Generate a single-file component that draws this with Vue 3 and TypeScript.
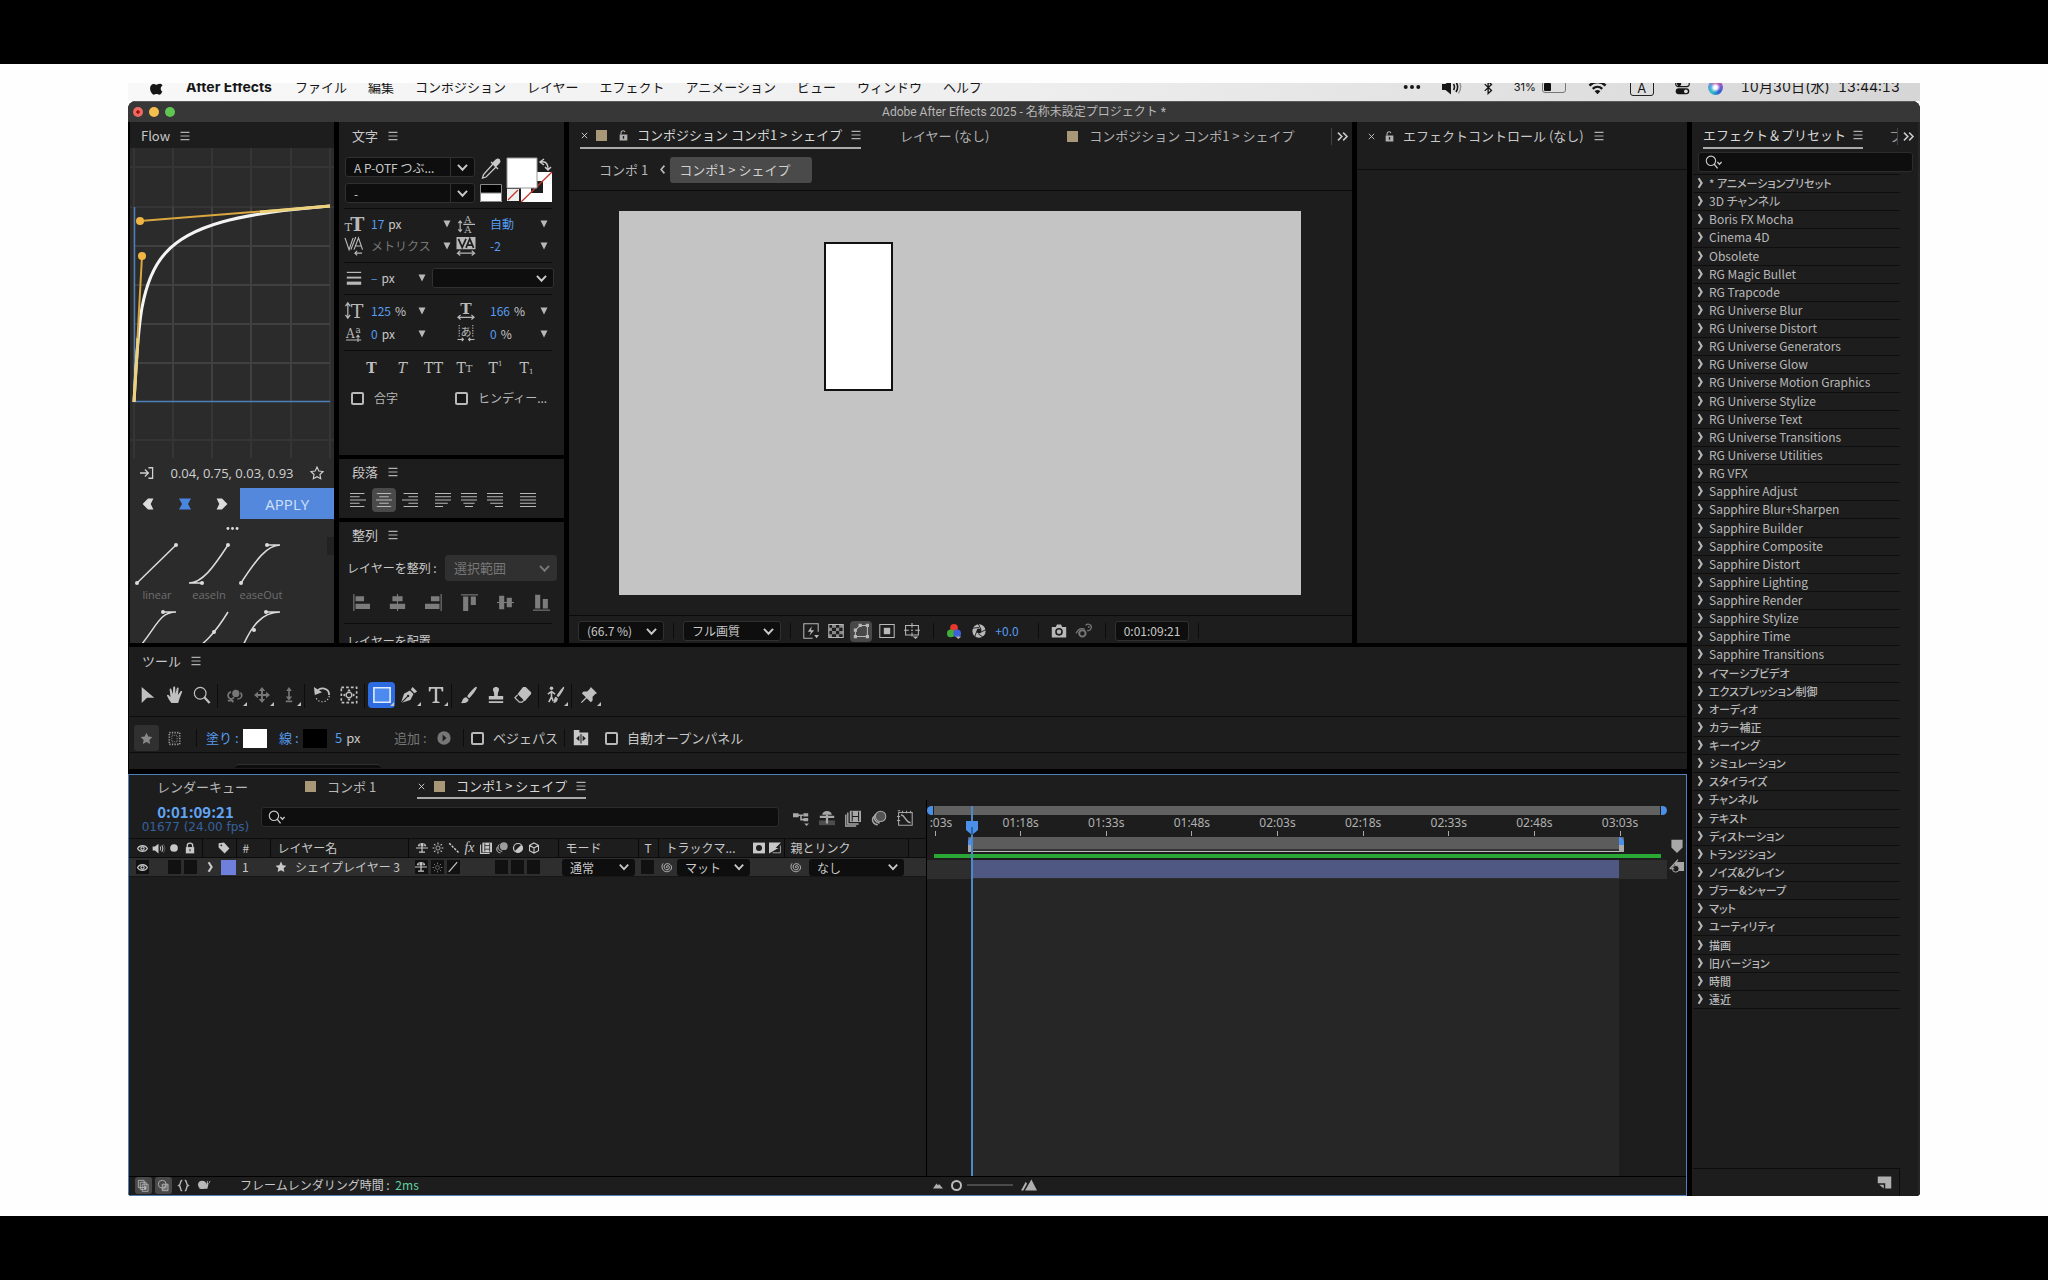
<script setup lang="ts">
import { h, ref } from 'vue'

const F = 'fill="currentColor" stroke="none"'
const SERIF = 'font-family="DejaVu Serif, serif" fill="currentColor" stroke="none"'

const ICONS: Record<string, string> = {
  apple: `<path ${F} d="M13.6 1c.1 1.400-1.300 3.400-3.200 3.400C10.200 2.800 11.800 1.200 13.600 1zM16.800 14.600c-.8 1.900-2 3.900-3.500 3.900-1.300 0-1.700-.8-3.200-.8s-2 .8-3.200.8C4.800 18.500 2.400 14.300 2.400 11c0-3.400 2.200-5.200 4.200-5.200 1.400 0 2.500.9 3.400.9.800 0 2.200-1 3.900-1 .7 0 2.200.2 3.200 1.800-3.100 1.900-2.500 5.800-.3 7.100z"/>`,
  dots3: `<g ${F}><circle cx="3" cy="10" r="2.200"/><circle cx="10" cy="10" r="2.200"/><circle cx="17" cy="10" r="2.200"/></g>`,
  speaker: `<path ${F} d="M1 7h3.500L10 2.500v15L4.500 13H1z"/><path stroke-width="1.600" d="M12.500 7c1.300 2 1.300 4 0 6M15 5c2.300 3.500 2.300 6.500 0 10"/><path opacity=".4" d="M17.500 3.500c3 4.500 3 8.500 0 13"/>`,
  bluetooth: `<path stroke-width="1.800" d="M5 5.500l9 8.500-4.500 4V2L14 6l-9 8.500"/>`,
  wifi: `<path stroke-width="2.400" d="M1.500 8c5-5 12-5 17 0M5 11.500c3-3 7-3 10 0"/><path ${F} d="M7 14c2-1.800 4-1.800 6 0l-3 3.200z"/>`,
  toggles: `<rect x="2" y="3" width="16" height="6" rx="3"/><circle ${F} cx="6" cy="6" r="2.500"/><rect ${F} x="2" y="11" width="16" height="7" rx="3.500"/><circle cx="14" cy="14.500" r="2.200" fill="#ddd" stroke="none"/>`,
  menu: `<path stroke-width="1.800" d="M2.500 4h15M2.500 10h15M2.500 16h15"/>`,
  close: `<path stroke-width="2" d="M4 4l12 12M16 4L4 16"/>`,
  lock: `<path ${F} d="M3 8h14v11H3z"/><path stroke-width="2" d="M5.500 8V5c0-4.500 6.500-4.500 7-1"/><path stroke="#1d1d1d" stroke-width="2.400" d="M10 11v5"/>`,
  locked: `<path ${F} d="M3 8.500h14V19H3z"/><path stroke-width="2.200" d="M5.500 9V6c0-5.500 9-5.500 9 0v3"/><path stroke="#1d1d1d" stroke-width="1.600" d="M10 11.500v4"/>`,
  more: `<path stroke-width="2.400" d="M3 4l6 6-6 6M11 4l6 6-6 6"/>`,
  chev: `<path stroke-width="3" d="M3 6l7 7.500L17 6"/>`,
  right: `<path stroke-width="3.600" d="M6 2l5 8-5 8"/>`,
  left: `<path stroke-width="3" d="M13.500 3L7.500 10l6 7"/>`,
  tri: `<path ${F} d="M3 3h14l-7 14z"/>`,
  search: `<circle cx="7" cy="8" r="5.500"/><path stroke-width="1.600" d="M10.800 12l4 5M14.500 9.500l2.500 2.500 2.500-2.500"/>`,
  dropper: `<path d="M11 6.500l3 3-8.500 8.500-3.500 1 .8-3.600z"/>`,
  size: `<text ${SERIF} x="0" y="17" font-size="12">T</text><text ${SERIF} x="6" y="17" font-size="20" font-weight="700">T</text>`,
  leading: `<text ${SERIF} x="8" y="9" font-size="11">A</text><path d="M7 10.500h13M3.500 7v11M1.500 9l2-2.500 2 2.500M1.500 16l2 2.500 2-2.500"/><text ${SERIF} x="8" y="20" font-size="11">A</text>`,
  kern: `<path d="M0 1l4.500 13L9 1M6.500 14L12 0M10 14l5-13 4.500 13M11.500 10h6M19 18h-8M13.500 15.500L11 18l2.500 2.500"/>`,
  track: `<path ${F} d="M0 0h20v13H0z"/><path stroke="#1d1d1d" stroke-width="1.800" d="M2 2l4 9 4-9M10 11.500L14 2l4 9.500M11.500 8.500h5"/><path d="M1 17h18M4 14.500L1 17l3 2.500M16 14.500l3 2.500-3 2.500"/>`,
  strokes: `<path stroke-width="1.500" d="M1 3h18"/><path stroke-width="2.400" d="M1 9.500h18"/><path stroke-width="4" d="M1 16.500h18"/>`,
  vscale: `<path d="M3.500 3v14M1 5.500L3.500 2 6 5.500M1 14.500L3.500 18 6 14.500"/><text ${SERIF} x="6.500" y="17.500" font-size="20">T</text>`,
  hscale: `<text ${SERIF} x="3.500" y="13" font-size="17" font-weight="700">T</text><path d="M1 17h18M4 14.500L1 17l3 2.500M16 14.500l3 2.500-3 2.500"/>`,
  baseline: `<text ${SERIF} x="0" y="15" font-size="15">A</text><path d="M0 17.500h19M15 12v8M13 14l2-2.500 2 2.500"/><text ${SERIF} x="12" y="9" font-size="11">a</text>`,
  tsume: `<text x="3.500" y="13" font-size="13" font-family="Noto Sans CJK JP, sans-serif" fill="currentColor" stroke="none">あ</text><path stroke-dasharray="1.500 1.500" d="M2 0v14M18 0v14"/><path d="M0 17h7M5 15l2 2-2 2M20 17h-7M15 15l-2 2 2 2"/>`,
  alL: `<path d="M0 2h18M0 6h12M0 10h20M0 14h12M0 18h18"/>`,
  alC: `<path d="M1 2h18M4 6h12M0 10h20M4 14h12M1 18h18"/>`,
  alR: `<path d="M2 2h18M8 6h12M0 10h20M8 14h12M2 18h18"/>`,
  juL: `<path d="M0 2h20M0 6h20M0 10h20M0 14h16M0 18h10"/>`,
  juC: `<path d="M0 2h20M0 6h20M0 10h20M3 14h14M5 18h10"/>`,
  juR: `<path d="M0 2h20M0 6h20M0 10h20M4 14h16M10 18h10"/>`,
  juF: `<path d="M0 2h20M0 6h20M0 10h20M0 14h20M0 18h20"/>`,
  lyL: `<path d="M1 0v20"/><path ${F} d="M3 2.500h10v6H3zM3 11.500h17v6H3z"/>`,
  lyC: `<path d="M10 0v20"/><path ${F} d="M4 2.500h12v6H4zM1 11.500h18v6H1z"/>`,
  lyR: `<path d="M19 0v20"/><path ${F} d="M7 2.500h10v6H7zM0 11.500h17v6H0z"/>`,
  lyT: `<path d="M0 1h20"/><path ${F} d="M2.500 3h6v17h-6zM11.500 3h6v10h-6z"/>`,
  lyM: `<path d="M0 10h20"/><path ${F} d="M2.500 2h6v16h-6zM11.500 4.500h6v11h-6z"/>`,
  lyB: `<path d="M0 19h20"/><path ${F} d="M2.500 1h6v16h-6zM11.500 6h6v11h-6z"/>`,
  enter: `<path stroke-width="1.800" d="M0 10h11M7 5l5 5-5 5M12 2.500h6v15h-6"/>`,
  star: `<path stroke-width="1.600" d="M10 1.500l2.600 5.600 6 .8-4.400 4.200 1.100 6L10 15.200l-5.300 2.900 1.100-6L1.400 7.900l6-.8z"/>`,
  starF: `<path ${F} d="M10 1l2.800 5.900 6.200.9-4.600 4.400 1.200 6.300L10 15.500l-5.600 3 1.200-6.300L1 7.800l6.200-.9z"/>`,
  inL: `<path ${F} d="M10 1h9l-4.500 9 4.500 9h-9l-9-9z"/>`,
  both: `<path ${F} d="M0 1h20l-5 9 5 9H0l5-9z"/>`,
  inR: `<path ${F} d="M10 1H1l4.500 9L1 19h9l9-9z"/>`,
  pvFast: `<path d="M19 11V1H1v18h11"/><path ${F} d="M11 4l-5 7h4l-2 5 6-7h-4zM14 15h6l-3 4z"/>`,
  checker: `<path d="M1 2h18v16H1z"/><path ${F} d="M5 2h5v4H5zM14 2h5v4h-5zM1 6h4v4H1zM10 6h4v4h-4zM5 10h5v4H5zM14 10h5v4h-5zM1 14h4v4H1zM10 14h4v4h-4z" opacity=".7"/>`,
  maskp: `<path d="M3 17V9l6-6h9v14z"/><path ${F} d="M1 15h4v4H1zM16 15h4v4h-4zM16 1h4v4h-4zM7 1h4v4H7zM1 7h4v4H1z"/>`,
  roi: `<path d="M1 2h18v16H1z"/><path ${F} d="M6 6h8v8H6z"/>`,
  guides: `<path d="M2 3h16v12H2zM10 0v6M10 12v5M0 9h6M14 9h6"/><path ${F} d="M9 8h2v2H9zM11 17h7l-3.500 3z"/>`,
  rgb: `<circle cx="10" cy="6" r="4.800" fill="#e8382e" stroke="none"/><circle cx="6" cy="13" r="4.800" fill="#3fae3a" stroke="none"/><circle cx="14" cy="13" r="4.800" fill="#3b62d8" stroke="none"/><path ${F} d="M12 17h7l-3.500 3z"/>`,
  aperture: `<circle cx="10" cy="10" r="6.500" stroke-width="6"/><path stroke="#1d1d1d" d="M9 0l4 8M20 8l-8 4M16 19l-7-5M4 18l3-8M0 6l10-1"/>`,
  camera: `<path ${F} d="M1 5h5l1.500-3h5L14 5h5v13H1z"/><circle cx="10" cy="11" r="3.800" stroke="#1d1d1d" stroke-width="2"/>`,
  snap: `<circle cx="8" cy="13" r="4" stroke-width="2.500"/><path stroke-width="1.600" d="M0 13c3-6 7-7 11-5M12 3c3-3 8-1 7 3s-4 4-5 3M15 5h2"/>`,
  arrow: `<path ${F} d="M3 1l14 12H9l-6 6z"/>`,
  hand: `<path ${F} d="M6 19C4 16 2 13 1 10.500c.5-1.500 2-1 3 .8l1 1L4 4c0-1.500 1.800-1.500 2.100 0L7.500 9 8 1.800c.1-1.500 2.200-1.500 2.200 0L10.500 9l1.500-6.500c.4-1.500 2.200-1 2 .5L13.200 10 16 6c1-1 2.400-.3 1.800 1L15 14c-.5 2-1 3.500-1.500 5z"/>`,
  zoom: `<circle cx="8" cy="8" r="6.500"/><path stroke-width="2.500" d="M12.500 12.500L18.500 19"/>`,
  orbit: `<circle ${F} cx="11" cy="8" r="4.500"/><path stroke-width="2" d="M5 6C0 8 0 13 5 15M13 15c5 0 7-4 4-8M9 13l-4 2.500L8 19M1 17h7"/>`,
  pan: `<path stroke-width="2.400" d="M10 3v14M3 10h14"/><path ${F} d="M6 5l4-5 4 5zM6 15l4 5 4-5zM5 6l-5 4 5 4zM15 6l5 4-5 4z"/>`,
  dolly: `<path stroke-width="2" d="M10 3v12M6 18h8"/><path ${F} d="M6.500 5L10 0l3.500 5zM6 12h8l-4 5z"/>`,
  rotate: `<path stroke-width="2" d="M4 7c4-7 14-5 14 3"/><path stroke-dasharray="1.500 2" d="M18 11c-1 8-13 9-15 1"/><path ${F} d="M1 1l1 9 8-3z"/>`,
  anchor: `<path stroke-dasharray="3 2.300" stroke-width="1.800" d="M1.500 1.500h17v17h-17z"/><circle cx="10" cy="10" r="3"/><path ${F} d="M10 3l2 3H8zM10 17l2-3H8zM3 10l3-2v4zM17 10l-3-2v4z"/>`,
  rect: `<path stroke="#dfeaff" fill="#4c8af0" stroke-width="1.800" d="M1 2h18v16H1z"/>`,
  pen: `<path ${F} d="M1 19L4.500 8.500 11 5l4 4-3.500 6.500zM12 4l2-3 5 5-3 2z"/><path stroke="#1d1d1d" d="M1 19l7.500-7.500"/><circle cx="9" cy="11" r="1.300" fill="#1d1d1d" stroke="none"/>`,
  type: `<path ${F} d="M2 1h16v5h-1.500L15.500 3H11.300v14l2.700.8V19H6v-1.200l2.700-.8V3H4.500L3.500 6H2z"/>`,
  brush: `<path ${F} d="M18.500 1c1.500 1-6 11-8.500 12.500L8 11.500C10 8 17 0 18.500 1zM7 12.500l2.500 2.500c0 3-4 4.500-8.500 4 2-1 1-6 6-6.500z"/>`,
  stamp: `<path ${F} d="M10 1c3 0 4 2.500 3 4.500-1 2-1 3.500-1 5.500h6v4H2v-4h6c0-2 0-3.500-1-5.500S7 1 10 1zM2 17h16v2H2z"/>`,
  eraser: `<path ${F} d="M10 1h3l6 6v2l-7 8-8-8z"/><path d="M4 10l-3 3 5 5h3l2.500-2.500"/>`,
  roto: `<circle ${F} cx="5" cy="2.500" r="2"/><path stroke-width="1.800" d="M1 9l4-3 4 3M5 6v6l-3 6M5 12l2 5"/><path ${F} d="M19 1c1 1-4 9-6.500 11.500l-1.800-1.700C12.500 8 18 0 19 1zM10 12l2 2c0 3-2 5-5 5 1.500-2 0-6 3-7z"/>`,
  pin: `<path ${F} d="M12 1l7 7-2 .8-3 3.200v4L12 18l-4.500-4.500L2 19l-1-1 5.500-5.500L2 8l2-2h4l3-3z"/>`,
  maskbox: `<path stroke-dasharray="2 2" stroke-width="2.500" d="M2 1h16v18H2z"/><path stroke-dasharray="1.500 1.500" d="M6 5h8v10H6z"/>`,
  play: `<circle ${F} cx="10" cy="10" r="9.500"/><path fill="#1d1d1d" stroke="none" d="M8 5l5.500 5L8 15z"/>`,
  panelIc: `<path ${F} d="M1 0h7v3h11v16H1z"/><path stroke="#1d1d1d" d="M8.500 2h11M10 5v12"/><path fill="#1d1d1d" stroke="none" d="M8 7v7l-4-3.500zM12 7v7l4-3.500z"/>`,
  eye: `<path stroke-width="2" d="M1 10c4-7 14-7 18 0-4 7-14 7-18 0z"/><circle cx="10" cy="10" r="3" stroke-width="2"/>`,
  dot: `<circle ${F} cx="10" cy="10" r="5.500"/>`,
  tag: `<path ${F} d="M1 2l9-1 9 10-8 8L1 9z"/><circle cx="5.500" cy="5.500" r="1.500" fill="#1d1d1d" stroke="none"/>`,
  shy: `<path ${F} d="M3 7c0-7 14-7 14 0z"/><path stroke="#1d1d1d" d="M7 2.500V7M13 2.500V7"/><path stroke-width="2" d="M0 10h20M10 6v11M5 17h10"/>`,
  sun: `<circle cx="10" cy="10" r="3.500"/><path stroke-width="1.800" d="M10 1v3M10 16v3M1 10h3M16 10h3M3.500 3.500l2.200 2.200M14.300 14.300l2.200 2.200M16.500 3.500l-2.200 2.200M5.700 14.300l-2.200 2.200"/>`,
  qual: `<path stroke-width="2.500" stroke-dasharray="4 2" d="M2 2l16 16"/>`,
  slash: `<path stroke-width="2" d="M3 18L17 2"/>`,
  film: `<path ${F} d="M4 1h16v16H4z"/><path stroke="#1d1d1d" d="M8 2v14M16 2v14M8 6h8M8 12h8"/><path stroke-width="1.800" d="M1 4v15h15"/>`,
  blur: `<circle ${F} cx="13" cy="7" r="6.500" opacity=".75"/><path stroke-width="1.600" d="M5.500 4c-4 4-2 11 5 11.500M2.500 8c-3 5 0 10 5 10"/>`,
  blend: `<circle cx="10" cy="10" r="7.500" stroke-width="2"/><path ${F} d="M15.500 4.500a7.500 7.500 0 0 1-11 11z"/>`,
  cube: `<path stroke-width="1.800" d="M10 1.500l7.500 4v9L10 18.500l-7.500-4v-9zM2.500 5.500L10 10l7.500-4.500M10 10v8.500"/>`,
  spiral: `<path stroke-width="1.500" d="M11 11c-1.500.8-2.500-.5-2-2 1-2 5-1.500 5 1.500 0 4-4 5-6.500 3.500C3.500 11 5 4.500 10.500 4.500c5 0 8.500 4.500 6.500 9C14.500 18.500 8 19 4.500 16 1.500 13.500.5 8 3.500 4"/>`,
  matteA: `<path ${F} d="M0 1h20v18H0z"/><circle cx="10" cy="10" r="5" fill="#1d1d1d" stroke="none"/>`,
  matteB: `<path ${F} d="M0 1h20l-9 9 5 0-16 9z"/><path d="M19 6v12H6"/>`,
  flow: `<path ${F} d="M0 4h7v5H0zM13 4h6v4h-6zM13 10h6v4h-6zM14 17h6l-3 3z"/><path stroke-width="2" d="M5 6.500h8M10 6v6h4"/>`,
  shyBig: `<path ${F} d="M0 13h20v6H0z" opacity=".35"/><path ${F} d="M4 6c0-6.500 12-6.500 12 0z"/><path stroke-width="2.800" d="M1 8.500h18M10 6v11"/>`,
  frames: `<path ${F} d="M6 1h14v14H6z"/><path stroke="#1d1d1d" d="M9 2v12M17 2v12M9 8h8"/><path stroke-width="1.700" d="M3.500 3v14.500H17M1 5.500V20h13"/>`,
  blurBig: `<circle cx="12" cy="8" r="6.500" fill="currentColor" fill-opacity=".4"/><path stroke-width="1.700" d="M6 5c-4 4-2 10 5 11.500M3.500 8c-3.500 4-1 10 5 10.500"/>`,
  graph: `<path d="M2 3h17v16H2zM1 1h3M7 1v3M12 1v3M17 1v3M0 8h4M0 13h4"/><path stroke-width="1.800" d="M5 6c6 1 5 9 12 10"/>`,
  marker: `<path ${F} d="M2 1h16v11l-8 8-8-8z"/>`,
  compBtn: `<path ${F} d="M8 4h12v12H8z"/><circle cx="9" cy="13" r="4.500" fill="#1d1d1d"/><path stroke-width="1.600" d="M1 13L12 1M1 13h6"/>`,
  pages: `<path d="M2 2h9v11H2zM5 5h9v11H5zM8 8h9v11H8z"/><path ${F} d="M11 11h3v5h-3z"/>`,
  pages2: `<circle cx="8" cy="8" r="6"/><path d="M8 8h9v10H8z" fill="currentColor" fill-opacity=".35"/><path d="M10 16l5-6"/>`,
  braces: `<path stroke-width="2.200" d="M8 2C4 2 7 8 3 10c4 2 1 8 5 8M12 2c4 0 1 6 5 8-4 2-1 8-5 8"/>`,
  snail: `<circle ${F} cx="8" cy="9" r="6.500"/><path ${F} d="M2 15h14l2-9h-3l-2 6z"/><path d="M16 7V3M19 6l1-3"/>`,
  mount: `<path ${F} d="M0 17l7-10 3 4 2-3 8 9z"/>`,
  mounts: `<path ${F} d="M0 17l6-11 1.500 2.500L3 17zM5 17L13 3l7 14z"/>`,
  note: `<path ${F} d="M1 2h18v16h-8v-7H1z"/><path ${F} d="M3 13h6v5z"/>`
}

interface IconProps { n: string; s?: number }
const Icon = (p: IconProps) =>
  h('svg', {
    viewBox: '0 0 20 20', width: p.s ?? 16, height: p.s ?? 16, fill: 'none', stroke: 'currentColor',
    'stroke-width': 1.3, 'aria-hidden': 'true', overflow: 'visible', innerHTML: ICONS[p.n]
  })
Icon.props = ['n', 's']

const menus = ['ファイル', '編集', 'コンポジション', 'レイヤー', 'エフェクト', 'アニメーション', 'ビュー', 'ウィンドウ', 'ヘルプ']

const effects = [
  '* アニメーションプリセット', '3D チャンネル', 'Boris FX Mocha', 'Cinema 4D', 'Obsolete', 'RG Magic Bullet', 'RG Trapcode',
  'RG Universe Blur', 'RG Universe Distort', 'RG Universe Generators', 'RG Universe Glow', 'RG Universe Motion Graphics',
  'RG Universe Stylize', 'RG Universe Text', 'RG Universe Transitions', 'RG Universe Utilities', 'RG VFX', 'Sapphire Adjust',
  'Sapphire Blur+Sharpen', 'Sapphire Builder', 'Sapphire Composite', 'Sapphire Distort', 'Sapphire Lighting', 'Sapphire Render',
  'Sapphire Stylize', 'Sapphire Time', 'Sapphire Transitions', 'イマーシブビデオ', 'エクスプレッション制御', 'オーディオ', 'カラー補正',
  'キーイング', 'シミュレーション', 'スタイライズ', 'チャンネル', 'テキスト', 'ディストーション', 'トランジション', 'ノイズ&グレイン',
  'ブラー&シャープ', 'マット', 'ユーティリティ', '描画', '旧バージョン', '時間', '遠近'
]
const isJapanese = (s: string) => !/^[A-Z0-9]/.test(s)

const tools: string[][] = [
  ['arrow', 'hand', 'zoom'], ['orbit*', 'pan*', 'dolly*'], ['rotate', 'anchor'], ['rect*', 'pen*', 'type*'],
  ['brush', 'stamp', 'eraser'], ['roto*'], ['pin*']
]
const active = ref('rect*')
const dimmed = ['orbit*', 'pan*', 'dolly*']

const presets = [
  { name: 'linear', d: 'M4 42L43 4', dots: [[4, 42], [43, 4]] },
  { name: 'easeIn', d: 'M4 42H17M4 42C17 42 28 27 43 4', dots: [[17, 42], [43, 4]] },
  { name: 'easeOut', d: 'M4 42C19 19 30 4 43 4M43 4H30', dots: [[4, 42], [30, 4]] },
  { name: '', d: 'M4 42C24 19 26 4 43 4M43 4H30', dots: [[30, 4]] },
  { name: '', d: 'M4 42C16 42 32 22 43 4', dots: [[29, 24]] },
  { name: '', d: 'M4 42C14 19 24 4 43 4M43 4H29', dots: [[17, 22], [29, 4]] }
]

const gridX = [4, 43, 82, 121, 161, 200]
const gridY = [98, 137, 176, 215]
const faintY = [19, 59, 292]

const ticks = [':03s', '01:18s', '01:33s', '01:48s', '02:03s', '02:18s', '02:33s', '02:48s', '03:03s']
const tickLeft = (i: number) => `${(i / (ticks.length - 1)) * 100}%`
const search = ref('')
const layerSearch = ref('')
</script>

<template>
  <div class="page">
    <div class="paper">
      <nav class="menubar">
        <Icon n="apple" :s="17" class="apple" />
        <a href="#" class="appname">After Effects</a>
        <a v-for="m in menus" :key="m" href="#">{{ m }}</a>
        <div class="status">
          <Icon n="dots3" :s="18" />
          <Icon n="speaker" :s="20" class="s1" />
          <Icon n="bluetooth" :s="15" class="s2" />
          <span class="pct">31%</span>
          <span class="battery"><i></i></span>
          <Icon n="wifi" :s="19" class="s3" />
          <span class="ime">A</span>
          <Icon n="toggles" :s="17" class="s4" />
          <span class="siri"></span>
          <span class="date">10月30日(水)</span>
          <span class="clock">13:44:13</span>
        </div>
      </nav>

      <div class="window">
        <header class="titlebar">
          <div class="lights"><i class="r"></i><i class="y"></i><i class="g"></i></div>
          <h1>Adobe After Effects 2025 - 名称未設定プロジェクト *</h1>
        </header>

        <div class="work">
          <div class="main">
            <div class="upper">
              <section class="panel flowp">
                <div class="tabs"><span class="title">Flow</span><Icon n="menu" :s="12" class="mn" /></div>
                <div class="flowbody">
                  <svg class="curve" viewBox="0 0 204 310" width="204" height="310">
                    <g stroke="#353535" stroke-width="2">
                      <path v-for="x in gridX" :key="'x' + x" :d="`M${x} 0V310`" />
                      <path v-for="y in faintY" :key="'f' + y" :d="`M0 ${y}H204`" />
                    </g>
                    <g stroke="#404040" stroke-width="2">
                      <path v-for="x in gridX.slice(1, 5)" :key="'v' + x" :d="`M${x} 59V254`" />
                      <path v-for="y in gridY" :key="'y' + y" :d="`M4 ${y}H200`" />
                    </g>
                    <path d="M4.500 59V253.500H200" fill="none" stroke="#4d7fb8" stroke-width="1.500" />
                    <path d="M4 254C12 108 10 73 200 58" fill="none" stroke="#f4f4f4" stroke-width="3" />
                    <path d="M4 254L12 108M10 73L200 58" stroke="#d9a63f" stroke-width="2" />
                    <path d="M4 254L8 190M130 64L200 58" stroke="#ecd07c" stroke-width="3" />
                    <circle cx="12" cy="108" r="4" fill="#f0b543" /><circle cx="10" cy="73" r="4" fill="#f0b543" />
                  </svg>
                  <div class="vals"><Icon n="enter" :s="14" /><span>0.04, 0.75, 0.03, 0.93</span><Icon n="star" :s="14" /></div>
                  <div class="apply">
                    <button aria-label="in"><Icon n="inL" :s="12" /></button>
                    <button aria-label="both" class="on"><Icon n="both" :s="12" /></button>
                    <button aria-label="out"><Icon n="inR" :s="12" /></button>
                    <button class="go">APPLY</button>
                  </div>
                  <div class="grip"><Icon n="dots3" :s="13" /></div>
                  <div class="presets">
                    <figure v-for="(p, i) in presets" :key="i">
                      <svg viewBox="0 0 48 46" width="48" height="46">
                        <path :d="p.d" fill="none" stroke="#dcdcdc" stroke-width="1.500" />
                        <circle v-for="(c, j) in p.dots" :key="j" :cx="c[0]" :cy="c[1]" r="2" fill="#dcdcdc" />
                      </svg>
                      <figcaption>{{ p.name }}</figcaption>
                    </figure>
                    <i class="scroll"></i>
                  </div>
                </div>
              </section>

              <div class="charcol">
                <section class="panel charp">
                  <div class="tabs"><span class="title">文字</span><Icon n="menu" :s="12" class="mn" /></div>
                  <div class="fontrow">
                    <div class="fonts">
                      <label class="sel split"><select aria-label="font"><option>A P-OTF つぶ...</option></select><Icon n="chev" :s="13" /></label>
                      <label class="sel split"><select aria-label="style"><option>-</option></select><Icon n="chev" :s="13" /></label>
                    </div>
                    <svg class="swatches" viewBox="0 0 74 46" width="74" height="46">
                      <g fill="none" stroke="#c8c8c8" stroke-width="1.300">
                        <path d="M13 7l3 3-10 10-3.500 1 1-3.500zM11 5l7 7" /><path d="M13 6l3-3c3-2 5 1 3 3l-3 3z" fill="#c8c8c8" />
                        <path d="M61 5c6-1 7 3 7 8M64 2l-4 3 4 3M65 10l3 3 3-3" stroke-width="1.500" />
                      </g>
                      <path d="M41 15h31v30H41z" fill="#fff" /><path d="M51 24h12v12H51z" fill="#1d1d1d" /><path d="M41 45L72 15" stroke="#c0392b" stroke-width="1.300" />
                      <path d="M27 1h30v30H27z" fill="#fff" stroke="#999" />
                      <path d="M0 27h22v9H0z" fill="#000" /><path d="M0 36h22v9H0z" fill="#fff" /><path d="M.5 27.500h21v17H.5zM0 36h22" fill="none" stroke="#8a8a8a" />
                      <path d="M27 32h12v12H27z" fill="#eee" /><path d="M28 43L38 33" stroke="#c0392b" stroke-width="1.300" />
                    </svg>
                  </div>
                  <hr>
                  <div class="crow">
                    <Icon n="size" :s="19" /><button class="v w">17 <em>px</em></button><Icon n="tri" :s="10" />
                    <div class="half"><Icon n="leading" :s="18" /><button class="v">自動</button><Icon n="tri" :s="10" /></div>
                  </div>
                  <div class="crow">
                    <Icon n="kern" :s="18" /><button class="v w dim">メトリクス</button><Icon n="tri" :s="10" />
                    <div class="half"><Icon n="track" :s="19" /><button class="v">-2</button><Icon n="tri" :s="10" /></div>
                  </div>
                  <hr>
                  <div class="crow stroke">
                    <Icon n="strokes" :s="16" /><button class="v">– <em>px</em></button><Icon n="tri" :s="10" />
                    <label class="sel"><select aria-label="stroke order"><option></option></select><Icon n="chev" :s="13" /></label>
                  </div>
                  <hr>
                  <div class="crow low">
                    <Icon n="vscale" :s="19" /><button class="v">125 <em>%</em></button><Icon n="tri" :s="10" />
                    <div class="half"><Icon n="hscale" :s="18" /><button class="v">166 <em>%</em></button><Icon n="tri" :s="10" /></div>
                  </div>
                  <div class="crow low">
                    <Icon n="baseline" :s="16" /><button class="v">0 <em>px</em></button><Icon n="tri" :s="10" />
                    <div class="half"><Icon n="tsume" :s="17" /><button class="v">0 <em>%</em></button><Icon n="tri" :s="10" /></div>
                  </div>
                  <hr>
                  <div class="styles">
                    <button><b>T</b></button><button><i>T</i></button><button>TT</button><button>T<small>T</small></button><button>T<sup>1</sup></button><button>T<sub>1</sub></button>
                  </div>
                  <div class="checks">
                    <label><input type="checkbox"><span>合字</span></label>
                    <label><input type="checkbox"><span>ヒンディー...</span></label>
                  </div>
                </section>

                <section class="panel parap">
                  <div class="tabs"><span class="title">段落</span><Icon n="menu" :s="12" class="mn" /></div>
                  <div class="aligns">
                    <button aria-label="left"><Icon n="alL" /></button><button aria-label="center" class="on"><Icon n="alC" /></button><button aria-label="right"><Icon n="alR" /></button>
                    <button aria-label="justify left" class="gap"><Icon n="juL" /></button><button aria-label="justify center"><Icon n="juC" /></button><button aria-label="justify right"><Icon n="juR" /></button>
                    <button aria-label="justify all" class="gap"><Icon n="juF" /></button>
                  </div>
                </section>

                <section class="panel alignp">
                  <div class="tabs"><span class="title">整列</span><Icon n="menu" :s="12" class="mn" /></div>
                  <div class="alrow">
                    <label for="alignto">レイヤーを整列 :</label>
                    <span class="sel"><select id="alignto" disabled><option>選択範囲</option></select><Icon n="chev" :s="13" /></span>
                  </div>
                  <div class="lyrow">
                    <button v-for="n in ['lyL', 'lyC', 'lyR', 'lyT', 'lyM', 'lyB']" :key="n" :aria-label="n"><Icon :n="n" :s="17" /></button>
                  </div>
                  <hr>
                  <p>レイヤーを配置</p>
                </section>
              </div>

              <section class="panel comp">
                <div class="tabs">
                  <div class="tab cur">
                    <Icon n="close" :s="9" /><i class="sq"></i><Icon n="lock" :s="11" class="lk" />
                    <span>コンポジション コンポ1 &gt; シェイプ</span><Icon n="menu" :s="12" class="mn" />
                  </div>
                  <div class="tab t2">レイヤー (なし)</div>
                  <div class="tab t3"><i class="sq"></i>コンポジション コンポ1 &gt; シェイプ</div>
                  <button class="morebtn" aria-label="more"><Icon n="more" :s="13" /></button>
                </div>
                <div class="crumbs">
                  <a href="#">コンポ 1</a><Icon n="left" :s="11" /><button>コンポ1 &gt; シェイプ</button>
                </div>
                <div class="viewer"><div class="canvas"><div class="shape"></div></div></div>
                <div class="vbar">
                  <label class="sel z"><select aria-label="zoom"><option>(66.7 %)</option></select><Icon n="chev" :s="13" /></label><i class="dv"></i>
                  <label class="sel q"><select aria-label="quality"><option>フル画質</option></select><Icon n="chev" :s="13" /></label><i class="dv"></i>
                  <div class="vic">
                    <button aria-label="fast preview"><Icon n="pvFast" /></button><button aria-label="transparency grid"><Icon n="checker" /></button>
                    <button aria-label="mask visibility" class="on"><Icon n="maskp" /></button><button aria-label="region"><Icon n="roi" /></button><button aria-label="guides"><Icon n="guides" /></button>
                  </div>
                  <i class="dv"></i>
                  <div class="vic"><button aria-label="channel"><Icon n="rgb" /></button><button aria-label="exposure reset"><Icon n="aperture" :s="14" /></button></div>
                  <button class="expo">+0.0</button><i class="dv"></i>
                  <div class="vic"><button aria-label="snapshot"><Icon n="camera" /></button><button aria-label="show snapshot" class="dim"><Icon n="snap" /></button></div>
                  <i class="dv"></i><button class="time">0:01:09:21</button><i class="dv"></i>
                </div>
              </section>

              <section class="panel ectl">
                <div class="tabs">
                  <div class="tab"><Icon n="close" :s="9" /><Icon n="lock" :s="11" class="lk" /><span>エフェクトコントロール (なし)</span><Icon n="menu" :s="12" class="mn" /></div>
                </div>
              </section>
            </div>

            <section class="panel toolsp">
              <div class="tabs"><span class="title">ツール</span><Icon n="menu" :s="12" class="mn" /></div>
              <div class="toolrow">
                <div v-for="(g, gi) in tools" :key="gi" class="group">
                  <button v-for="t in g" :key="t" :aria-label="t.replace('*', '')" :class="{ on: active === t, dim: dimmed.includes(t), sub: t.endsWith('*') }" @click="active = t">
                    <Icon :n="t.replace('*', '')" :s="dimmed.includes(t) ? 16 : 18" />
                  </button>
                </div>
              </div>
              <div class="optrow">
                <button class="st" aria-label="shape"><Icon n="starF" :s="13" /></button>
                <button class="mk" aria-label="mask"><Icon n="maskbox" :s="13" /></button>
                <span class="blue fill">塗り :</span><button class="sw white" aria-label="fill colour"></button>
                <span class="blue line">線 :</span><button class="sw" aria-label="stroke colour"></button>
                <button class="v px">5 <em>px</em></button>
                <span class="add">追加 : <Icon n="play" :s="14" /></span>
                <label class="bez"><input type="checkbox"><span>ベジェパス</span></label>
                <Icon n="panelIc" />
                <label class="auto"><input type="checkbox"><span>自動オープンパネル</span></label>
              </div>
              <div class="stub"></div>
            </section>

            <section class="panel timeline">
              <div class="tltabs">
                <div class="tab q">レンダーキュー</div>
                <div class="tab c"><i class="sq"></i>コンポ 1</div>
                <div class="tab cur"><Icon n="close" :s="9" /><i class="sq"></i><span>コンポ1 &gt; シェイプ</span><Icon n="menu" :s="12" class="mn" /></div>
              </div>
              <div class="tlbody">
                <div class="layers">
                  <div class="tlhead">
                    <div class="tc"><strong>0:01:09:21</strong><span>01677 (24.00 fps)</span></div>
                    <label class="srch"><Icon n="search" :s="17" /><input v-model="layerSearch" type="text" aria-label="layer search"></label>
                    <div class="sws">
                      <button v-for="n in ['flow', 'shyBig', 'frames', 'blurBig', 'graph']" :key="n" :aria-label="n"><Icon :n="n" :s="16" /></button>
                    </div>
                  </div>
                  <table>
                    <colgroup><col class="c1"><col class="c2"><col class="c3"><col class="c4"><col class="c5"><col class="c6"><col class="c7"><col class="c8"><col class="c9"><col></colgroup>
                    <thead>
                      <tr>
                        <th><div class="cells"><Icon n="eye" :s="11" /><Icon n="speaker" :s="13" /><Icon n="dot" :s="14" /><Icon n="locked" :s="12" /></div></th>
                        <th><div class="tagc"><Icon n="tag" :s="12" /></div></th>
                        <th class="num">#</th>
                        <th class="nm">レイヤー名</th>
                        <th><div class="cells sw8"><Icon v-for="n in ['shy', 'sun', 'qual']" :key="n" :n="n" :s="12" /><span class="fx">fx</span><Icon v-for="n in ['film', 'blur', 'blend', 'cube']" :key="n" :n="n" :s="12" /></div></th>
                        <th class="md">モード</th>
                        <th class="tt">T</th>
                        <th class="tm"><div>トラックマ... <span><Icon n="matteA" :s="12" /><Icon n="matteB" :s="12" /></span></div></th>
                        <th class="pr">親とリンク</th>
                        <th></th>
                      </tr>
                    </thead>
                    <tbody>
                      <tr>
                        <td><div class="cells"><b class="bx"><Icon n="eye" :s="11" /></b><b></b><b class="bx"></b><b class="bx"></b></div></td>
                        <td><div class="lab"><Icon n="right" :s="12" /><i></i></div></td>
                        <td class="num">1</td>
                        <td class="nm"><div><Icon n="starF" :s="12" />シェイプレイヤー 3</div></td>
                        <td><div class="cells sw8"><b class="bx"><Icon n="shy" :s="12" /></b><b class="bx dim"><Icon n="sun" :s="11" /></b><b class="bx"><Icon n="slash" :s="12" /></b><b></b><b></b><b class="bx"></b><b class="bx"></b><b class="bx"></b></div></td>
                        <td><label class="sel mode"><select aria-label="mode"><option>通常</option></select><Icon n="chev" :s="12" /></label></td>
                        <td><div class="cells one"><b class="bx"></b></div></td>
                        <td><div class="pick"><Icon n="spiral" :s="12" /><label class="sel matte"><select aria-label="track matte"><option>マット</option></select><Icon n="chev" :s="12" /></label></div></td>
                        <td><div class="pick par"><Icon n="spiral" :s="12" /><label class="sel parent"><select aria-label="parent"><option>なし</option></select><Icon n="chev" :s="12" /></label></div></td>
                        <td></td>
                      </tr>
                    </tbody>
                  </table>
                </div>
                <div class="tracks">
                  <div class="nav"><i></i><b></b><i class="end"></i></div>
                  <div class="ruler">
                    <div class="span">
                      <div v-for="(t, i) in ticks" :key="t" class="tick" :class="{ first: i === 0 }" :style="{ left: tickLeft(i) }"><span>{{ t }}</span></div>
                    </div>
                  </div>
                  <div class="warea"><i></i><i class="end"></i></div>
                  <div class="cache"></div>
                  <div class="bar"><i></i></div>
                  <div class="empty"><i></i></div>
                  <div class="playhead"><svg viewBox="0 0 12 14" width="12" height="14"><path d="M0 0h12v9l-6 5-6-5z" fill="#4a90e8" /><path d="M6 6v8" stroke="#16375f" /></svg></div>
                </div>
                <div class="rail"><Icon n="marker" :s="14" /><Icon n="compBtn" :s="15" /></div>
              </div>
              <footer class="tlfoot">
                <div class="fl">
                  <button class="on" aria-label="switches"><Icon n="pages" :s="13" /></button><button class="on" aria-label="modes"><Icon n="pages2" :s="13" /></button>
                  <button aria-label="in out"><Icon n="braces" :s="13" /></button><button aria-label="render time"><Icon n="snail" :s="13" /></button>
                  <span>フレームレンダリング時間 : <em>2ms</em></span>
                </div>
                <div class="fr"><Icon n="mount" :s="10" /><input type="range" min="0" max="100" value="0" aria-label="timeline zoom"><Icon n="mounts" :s="16" /></div>
              </footer>
            </section>
          </div>

          <aside class="panel presetsp">
            <div class="tabs">
              <div class="tab cur">エフェクト＆プリセット<Icon n="menu" :s="12" class="mn" /></div>
              <span class="cut">プ</span>
              <button class="morebtn" aria-label="more"><Icon n="more" :s="13" /></button>
            </div>
            <label class="srch"><Icon n="search" :s="17" /><input v-model="search" type="text" aria-label="effect search"></label>
            <ul><li v-for="e in effects" :key="e" :class="{ ja: isJapanese(e) }"><Icon n="right" :s="12" /><span>{{ e }}</span></li></ul>
            <div class="pfoot"><button aria-label="new preset"><Icon n="note" :s="15" /></button></div>
          </aside>
        </div>
      </div>
    </div>
  </div>
</template>

<style>
body { margin: 0; background: #000; }
</style>

<style scoped>
* { box-sizing: border-box; }
.page { min-height: 100vh; display: flex; flex-direction: column; background: #000; padding: 64px 0; font: 13px/18px "Noto Sans CJK JP", sans-serif; color: #c8c8c8; }
.paper { flex: 1; display: flex; flex-direction: column; background: #fefefe; padding: 19px 128px 20px; }
button { font: inherit; color: inherit; background: none; border: 0; padding: 0; margin: 0; display: flex; align-items: center; justify-content: center; white-space: nowrap; }
a { color: inherit; text-decoration: none; white-space: nowrap; }
em { font-style: normal; color: #c8c8c8; }
svg { flex: none; display: block; }
hr { border: 0; border-top: 1px solid #0c0c0c; margin: 0 12px 0 5px; width: auto; }
input[type="checkbox"] { appearance: none; width: 13px; height: 13px; margin: 0; border: 2px solid #b8b8b8; border-radius: 2px; background: #161616; flex: none; }

.menubar { height: 18px; overflow: hidden; display: flex; align-items: center; gap: 21px; padding: 0 20px 10px 20px; color: #161616; background: linear-gradient(90deg, #f8f8f8 0, #eee 50%, #d6d6d6 100%); font: 13px/18px Inter, "Noto Sans CJK JP", sans-serif; }
.appname { font-weight: 700; font-size: 14px; margin-right: 2px; }
.status { margin-left: auto; display: flex; align-items: center; white-space: nowrap; }
.s1 { margin-left: 20px; }
.s2 { margin-left: 20px; }
.pct { margin-left: 18px; font-size: 11px; }
.battery { width: 24px; height: 12px; margin-left: 6px; border: 1px solid #777; border-radius: 3px; padding: 1px; display: flex; }
.battery i { width: 7px; background: #111; border-radius: 1px; }
.s3 { margin-left: 22px; }
.ime { margin-left: 23px; width: 24px; height: 18px; border: 1px solid #222; border-radius: 3px; text-align: center; line-height: 18px; }
.s4 { margin-left: 20px; }
.siri { width: 15px; height: 15px; margin-left: 17px; border-radius: 50%; background: radial-gradient(circle, #fff 0 15%, transparent 45%), conic-gradient(#e0609a, #8a5ad0, #2a5fd0, #35c0c8, #53a0e0, #e0609a); }
.date, .clock { font-size: 14px; font-variant-numeric: tabular-nums; }
.date { margin-left: 18px; }
.clock { margin-left: 8px; }

.window { flex: 1; display: flex; flex-direction: column; background: #000; border-radius: 8px 8px 4px 4px; overflow: hidden; }
.titlebar { height: 21px; display: flex; align-items: center; background: #373737; border-top: 1px solid #5a5a5a; padding: 0 5px; }
.titlebar h1 { flex: 1; margin: 0 50px 0 0; text-align: center; font: 12px/18px Roboto, "Noto Sans CJK JP", sans-serif; color: #b8b8b8; }
.lights { display: flex; gap: 6px; width: 50px; }
.lights i { width: 10px; height: 10px; border-radius: 50%; }
.r { background: radial-gradient(circle, #a01010 0 20%, #ee6a5f 30%); }
.y { background: #f5bf4f; }
.g { background: #61c554; }

.work { flex: 1; display: flex; gap: 5px; }
.main { flex: 1; min-width: 0; display: flex; flex-direction: column; gap: 4px; }
.panel { background: #1d1d1d; }
.upper { height: 521px; display: flex; gap: 5px; padding-left: 2px; }
.tabs { height: 28px; display: flex; align-items: center; flex: none; color: #c8c8c8; white-space: nowrap; }
.title { margin-left: 13px; }
.mn { margin-left: 9px; color: #b0b0b0; }
.sq { width: 11px; height: 11px; background: #a89878; flex: none; }
.tab { display: flex; align-items: center; height: 26px; }
.cur { border-bottom: 2px solid #aaa; color: #d8d8d8; height: 25px; }
.lk { color: #b0b0b0; }
.morebtn { margin-left: auto; width: 21px; height: 17px; border-left: 1px solid #444; color: #c8c8c8; }

.sel { display: grid; align-items: center; height: 20px; background: #0e0e0e; border: 1px solid #303030; border-radius: 3px; color: #c8c8c8; }
.sel > * { grid-area: 1 / 1; }
.sel select { appearance: none; width: 100%; height: 18px; padding: 0 0 0 8px; background: none; border: 0; color: inherit; font: inherit; line-height: 18px; opacity: 1; }
.sel svg { justify-self: end; margin-right: 5px; pointer-events: none; }
.split svg { box-sizing: content-box; padding: 3px 0 3px 5px; border-left: 1px solid #303030; }

.flowp { width: 204px; flex: none; display: flex; flex-direction: column; }
.flowp .title { margin-left: 11px; }
.flowbody { flex: 1; min-height: 0; overflow: hidden; background: #2b2b2b; font-family: "Open Sans", sans-serif; display: flex; flex-direction: column; margin-top: -2px; }
.flowbody > * { flex: none; }
.vals { height: 30px; padding: 0 10px; display: flex; align-items: center; justify-content: space-between; font-size: 13px; color: #d0d0d0; }
.apply { height: 31px; display: flex; color: #dcdcdc; }
.apply button { width: 37px; }
.apply .on { color: #4a86e0; }
.apply .go { width: 94px; margin-left: auto; background: #5488dc; font-size: 15px; color: #cfe0f8; }
.grip { height: 18px; display: flex; justify-content: center; align-items: center; color: #ddd; }
.presets { position: relative; display: grid; grid-template-columns: 52px 52px 52px; grid-auto-rows: 67px; padding: 4px 0 0 3px; }
.presets figure { margin: 0; }
.presets figcaption { width: 48px; text-align: center; font-size: 11px; line-height: 16px; color: #6f6f6f; }
.scroll { position: absolute; right: 0; top: 0; width: 7px; height: 18px; background: #222; }

.charcol { width: 225px; flex: none; display: flex; flex-direction: column; gap: 4px; }
.charp { height: 333px; }
.fontrow { display: flex; gap: 5px; padding: 7px 0 5px 6px; }
.fonts { width: 130px; display: flex; flex-direction: column; gap: 6px; font-size: 12px; }
.crow { height: 22px; display: flex; align-items: center; padding: 0 15px 0 5px; color: #b8b8b8; font-size: 12px; }
.low { height: 23px; }
hr + .crow { margin-top: 4px; }
.crow + hr { margin-top: 5px; }
.crow > svg:first-child, .half > svg:first-child { width: 20px; }
.crow > .v { margin-left: 7px; width: 46px; }
.crow > .v.w { width: 71px; }
.v { color: #569cf0; justify-content: flex-start; gap: 4px; }
.dim { color: #777; }
.half { margin-left: auto; width: 93px; display: flex; align-items: center; }
.half .v { width: 45px; margin-left: 14px; }
.half svg:last-child { margin-left: auto; }
.stroke .sel { width: 122px; margin-left: auto; margin-right: -5px; }
.styles { height: 33px; display: flex; align-items: center; padding-left: 17px; font: 14px/18px "DejaVu Serif", serif; color: #c0c0c0; }
.styles button { width: 31px; }
.styles small { font-size: 10px; padding-top: 3px; }
.styles sup, .styles sub { font-size: 7px; line-height: 8px; }
.styles sup { padding-bottom: 7px; }
.styles sub { padding-top: 9px; }
.checks { display: flex; padding: 5px 0 0 12px; color: #b8b8b8; }
.checks label { width: 104px; display: flex; align-items: center; gap: 10px; white-space: nowrap; font-size: 12px; }
.parap { height: 59px; }
.parap .tabs, .alignp .tabs { height: 25px; }
.aligns { display: flex; padding: 4px 0 0 7px; color: #b8b8b8; }
.aligns button { width: 24px; height: 24px; margin-right: 2px; border-radius: 4px; }
.aligns .on { background: #4a4a4a; }
.aligns .gap { margin-left: 7px; }
.alignp { flex: 1; min-height: 0; overflow: hidden; }
.alrow { display: flex; align-items: center; gap: 4px; padding: 8px 0 0 8px; white-space: nowrap; }
.alrow .sel { width: 112px; height: 26px; background: #303030; color: #777; }
.alrow label { width: 94px; font-size: 12px; }
.lyrow { display: flex; padding: 13px 0 12px 4px; color: #7c7c7c; }
.lyrow button { width: 36px; }
.alignp p { margin: 8px 0 0 8px; font-size: 12px; }

.comp { flex: 1; min-width: 0; display: flex; flex-direction: column; }
.comp .cur { width: 281px; margin-left: 11px; }
.comp .cur .sq { margin: 0 11px 0 7px; }
.comp .cur span { margin-left: 8px; }
.cur .mn { margin-left: auto; margin-right: -1px; }
.t2 { margin-left: 39px; }
.t3 { margin-left: 78px; gap: 11px; }
.t2, .t3 { color: #b0b0b0; }
.crumbs { height: 41px; display: flex; align-items: center; padding: 0 0 1px 30px; border-bottom: 1px solid #0a0a0a; flex: none; color: #b8b8b8; }
.crumbs svg { margin: 0 2px 0 9px; }
.crumbs button { width: 142px; height: 26px; border-radius: 3px; background: #4a4a4a; color: #d0d0d0; justify-content: flex-start; padding-left: 9px; }
.viewer { flex: 1; padding: 20px 51px 20px 50px; display: flex; }
.canvas { flex: 1; background: #c4c4c4; padding: 31px 0 0 30%; }
.shape { width: 69px; height: 149px; background: #fff; border: 2px solid #111; }
.vbar { height: 28px; border-top: 1px solid #0a0a0a; display: flex; align-items: center; padding: 3px 0 0 9px; font-size: 12px; flex: none; }
.z { width: 86px; }
.q.sel { width: 98px; }
.dv { width: 1px; height: 16px; background: #0d0d0d; margin: 0 9px; flex: none; }
.dv:has(+ .vic) { margin-right: 7px; }
.vic { display: flex; color: #b8b8b8; }
.vic button { width: 25px; height: 21px; }
.vic .on { background: #484848; border-radius: 4px; width: 22px; margin: 0 2px; }
.vic .dim { color: #777; }
.expo { width: 32px; color: #569cf0; }
.expo + .dv { margin: 0 7px 0 15px; }
.time { width: 74px; height: 20px; background: #0e0e0e; border: 1px solid #303030; border-radius: 3px; }

.ectl { width: 330px; flex: none; }
.ectl .tabs { height: 48px; align-items: flex-start; border-bottom: 1px solid #0d0d0d; }
.ectl .tab { height: 28px; margin-left: 10px; }
.ectl .lk { margin: 0 8px; }

.toolsp { height: 122px; margin-bottom: 1px; margin-left: 1px; display: flex; flex-direction: column; }
.toolrow { height: 42px; display: flex; align-items: center; border-bottom: 1px solid #0d0d0d; padding: 0 0 1px 5px; color: #c0c0c0; flex: none; }
.group { display: flex; }
.group + .group::before { content: ""; width: 1px; height: 24px; margin: 2px 3px 0 2px; background: #0d0d0d; }
.group button { position: relative; width: 27px; height: 26px; border-radius: 4px; }
.group .on { background: #2d6be0; }
.group .sub::after { content: ""; position: absolute; right: 1px; bottom: 2px; border: 2px solid transparent; border-right-color: #c0c0c0; border-bottom-color: #c0c0c0; }
.optrow { height: 36px; display: flex; align-items: center; padding: 7px 0 0 5px; border-bottom: 1px solid #0d0d0d; flex: none; white-space: nowrap; }
.st { width: 25px; height: 26px; background: #303030; border-radius: 3px; color: #888; }
.mk { width: 30px; color: #999; }
.blue { color: #569cf0; }
.fill { border-left: 1px solid #0d0d0d; margin-left: 7px; padding-left: 9px; width: 47px; }
.line { margin-left: 12px; width: 24px; }
.sw { width: 24px; height: 19px; background: #000; flex: none; }
.white { background: #fff; }
.px { margin-left: 8px; width: 59px; }
.add { color: #777; display: flex; gap: 10px; align-items: center; width: 70px; border-right: 1px solid #0d0d0d; }
.optrow label { display: flex; align-items: center; gap: 9px; }
.bez { margin: 0 8px 0 7px; padding-right: 6px; border-right: 1px solid #0d0d0d; }
.auto { margin-left: 16px; }
.stub { width: 146px; height: 4px; margin: auto 0 1px 106px; background: #0d0d0d; border-radius: 4px 4px 0 0; border-top: 1px solid #303030; flex: none; }

.timeline { flex: 1; border: 1px solid #4f80b8; display: flex; flex-direction: column; }
.tltabs { height: 25px; display: flex; flex: none; white-space: nowrap; }
.tltabs .tab { height: 23px; }
.tltabs .q { margin-left: 28px; width: 148px; color: #b8b8b8; }
.tltabs .c { gap: 11px; width: 112px; color: #b8b8b8; }
.tltabs .cur { width: 169px; height: 24px; }
.tltabs .cur .sq { margin: 0 11px 0 8px; }
.tlbody { flex: 1; display: flex; }
.layers { width: 798px; flex: none; border-right: 1px solid #000; }
.tlhead { height: 38px; display: flex; align-items: flex-start; }
.tc { width: 132px; text-align: center; padding-left: 1px; line-height: 16px; margin-top: 4px; }
.tc strong { display: block; font-size: 15px; line-height: 15px; color: #62a4f4; }
.tc span { display: block; font: 12px/16px "DejaVu Sans", sans-serif; color: #35629c; white-space: nowrap; }
.srch { height: 20px; display: flex; align-items: center; gap: 4px; padding-left: 6px; background: #0e0e0e; border: 1px solid #2c2c2c; border-radius: 3px; }
.srch input { flex: 1; min-width: 0; background: none; border: 0; outline: 0; color: inherit; font: inherit; height: 18px; }
.tlhead .srch { width: 518px; margin-top: 7px; }
.sws { display: flex; margin: 10px 0 0 9px; color: #a8a8a8; }
.sws button { width: 26px; }
table { width: 797px; table-layout: fixed; border-collapse: collapse; font-size: 12px; }
th, td { padding: 0; height: 19px; line-height: 18px; font-weight: 400; text-align: left; white-space: nowrap; overflow: hidden; }
thead tr { border-top: 1px solid #0c0c0c; border-bottom: 1px solid #0c0c0c; }
th + th { border-left: 1px solid #0a0a0a; }
tbody tr { background: #2e2e2e; border-bottom: 1px solid #161616; }
.c1 { width: 73px; } .c2 { width: 34px; } .c3 { width: 34px; } .c4 { width: 138px; } .c5 { width: 150px; }
.c6 { width: 80px; } .c7 { width: 20px; } .c8 { width: 126px; } .c9 { width: 124px; }
.cells { display: grid; grid-template-columns: repeat(4, 16px); padding-left: 5px; align-items: center; justify-items: center; }
.sw8 { grid-template-columns: repeat(8, 16px); }
.one { grid-template-columns: 16px; padding-left: 1px; }
.bx { width: 13px; height: 14px; background: #111; display: flex; align-items: center; justify-content: center; }
.fx { font: italic 14px/16px "Liberation Serif", serif; }
.tagc { display: flex; justify-content: flex-end; padding-right: 6px; }
.num { text-align: left; padding-left: 6px; }
.nm { padding-left: 7px; }
.nm div { display: flex; align-items: center; gap: 8px; margin-left: -2px; }
.md { padding-left: 7px; }
.tt { padding-left: 6px; }
.tm div { display: flex; justify-content: space-between; padding: 0 3px 0 7px; }
.tm span { display: flex; gap: 4px; align-items: center; }
.pr { padding-left: 6px; }
.lab { display: flex; align-items: center; gap: 4px; padding-left: 3px; }
.lab i { width: 15px; height: 15px; background: #6e7fdc; }
td .sel { height: 17px; border: 0; }
td .sel select { height: 17px; line-height: 17px; }
.mode { width: 73px; margin-left: 4px; }
.pick { display: flex; align-items: center; gap: 4px; padding-left: 3px; }
.par { padding-left: 6px; gap: 7px; }
.matte { width: 73px; }
.parent { width: 95px; }

.tracks { flex: 1; min-width: 0; position: relative; display: flex; flex-direction: column; padding-top: 6px; }
.nav { height: 9px; display: flex; gap: 1px; }
.nav i { width: 6px; background: #4a90e8; border-radius: 5px 0 0 5px; }
.nav .end { border-radius: 0 5px 5px 0; }
.nav b { flex: 1; background: #626262; }
.ruler { height: 22px; padding: 0 47px 0 8px; overflow: hidden; }
.span { position: relative; height: 22px; }
.tick { position: absolute; bottom: 1px; width: 60px; margin-left: -30px; text-align: center; }
.tick span { display: block; font: 12px/16px "Noto Sans", sans-serif; color: #b0b0b0; }
.tick::after { content: ""; display: block; width: 1px; height: 5px; margin: 0 auto; background: #aaa; }
.first span { padding-left: 12px; }
.warea { height: 16px; margin: 0 43px 0 41px; display: flex; justify-content: space-between; background: linear-gradient(#5c5c5c 0 12px, #333 12px 14px, #bbb 14px 15px, #1d1d1d 15px); }
.warea i { width: 5px; height: 15px; background: linear-gradient(#4a90e8 0 8px, #aaa 8px); border-radius: 5px 0 0 0; }
.warea .end { border-radius: 0 5px 0 0; }
.cache { height: 4px; margin: 1px 6px 2px 7px; background: #2aa836; }
.bar { height: 19px; background: #2e2e2e; padding: 0 48px 1px 45px; display: flex; }
.bar i { flex: 1; background: #4f5883; }
.empty { flex: 1; padding: 0 48px 0 45px; display: flex; }
.empty i { flex: 1; background: #262626; }
.playhead { position: absolute; top: 6px; bottom: 0; left: 39px; width: 12px; padding-top: 15px; background: linear-gradient(90deg, transparent 5px, #4f88c8 5px 7px, transparent 7px); }
.rail { width: 19px; flex: none; padding-top: 39px; display: flex; flex-direction: column; gap: 6px; align-items: center; color: #a8a8a8; }
.tlfoot { height: 19px; border-top: 1px solid #000; display: flex; align-items: center; font-size: 12px; flex: none; padding-bottom: 2px; }
.fl { width: 798px; display: flex; align-items: center; padding-left: 6px; }
.fl button { width: 17px; height: 17px; margin-right: 3px; border-radius: 3px; color: #b8b8b8; }
.fl .on { background: #484848; }
.fl span { margin-left: 25px; }
.fl em { color: #5fd3a0; margin-left: 3px; }
.fr { display: flex; align-items: center; gap: 8px; padding-left: 6px; color: #b0b0b0; }
.fr input { appearance: none; width: 62px; height: 12px; margin: 0; background: linear-gradient(#4a4a4a, #4a4a4a) 100% 50% / 46px 2px no-repeat; }
.fr input::-webkit-slider-thumb { appearance: none; width: 11px; height: 11px; border: 2px solid #bbb; border-radius: 50%; background: #1d1d1d; }

.presetsp { width: 228px; flex: none; display: flex; flex-direction: column; border-right: 2px solid #262626; }
.presetsp .cur { width: 161px; margin-left: 11px; }
.cut { width: 8px; overflow: hidden; margin-left: 26px; color: #999; }
.presetsp .morebtn { margin-left: 0; }
.presetsp .srch { margin: 2px 5px 2px 6px; flex: none; }
.presetsp ul { list-style: none; margin: 0 18px 0 1px; padding: 0; height: 835px; display: grid; grid-auto-rows: 1fr; border-top: 1px solid #0c0c0c; font-size: 12px; line-height: 16px; font-feature-settings: "palt"; }
.presetsp li { display: flex; align-items: center; gap: 2px; padding: 0 0 1px 2px; border-bottom: 1px solid #0e0e0e; color: #b8b8b8; white-space: nowrap; overflow: hidden; }
.presetsp .ja { font-size: 11px; font-weight: 500; }
.pfoot { margin: auto 18px 0 1px; height: 28px; border: 1px solid #0c0c0c; border-width: 1px 1px 0 0; display: flex; justify-content: flex-end; align-items: center; padding-right: 7px; color: #b0b0b0; }
</style>
